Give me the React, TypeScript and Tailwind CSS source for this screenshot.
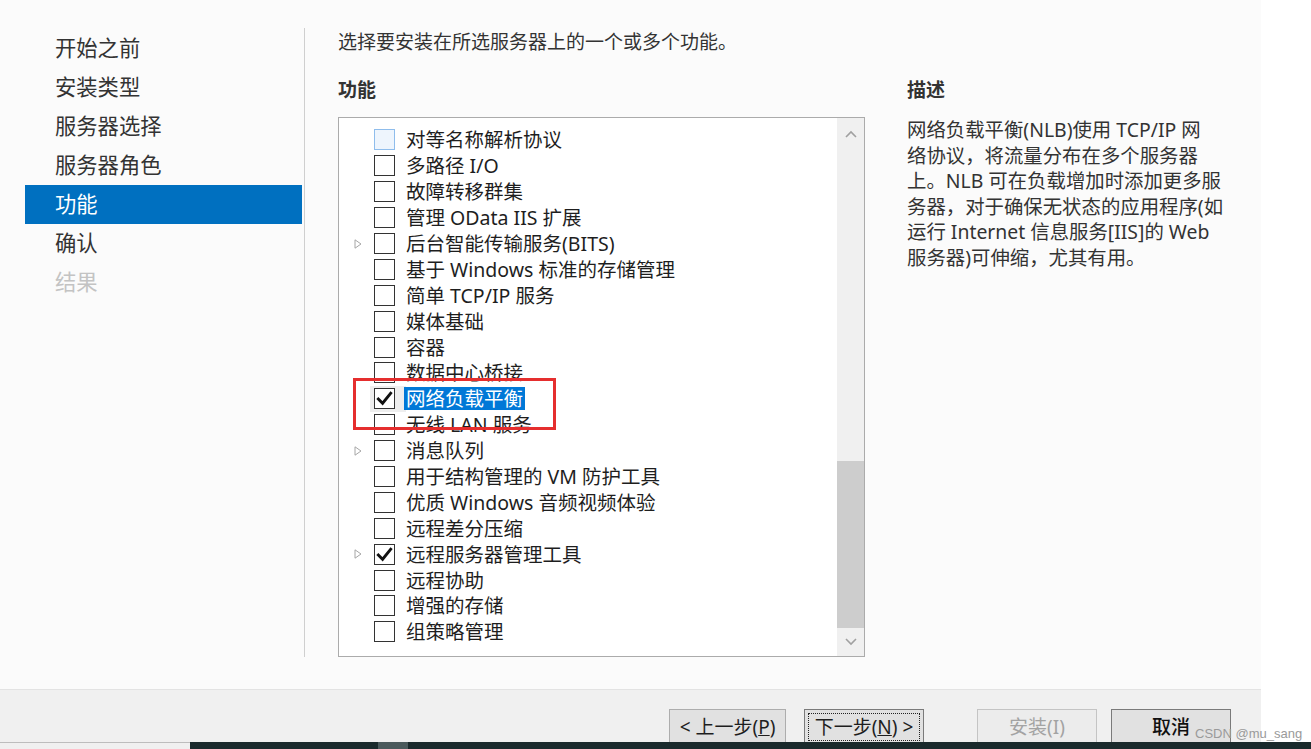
import React from "react";

type Feature = {
  label: string;
  checked?: boolean;
  expandable?: boolean;
  hover?: boolean;
  selected?: boolean;
};

const features: Feature[] = [
  { label: "对等名称解析协议", hover: true },
  { label: "多路径 I/O" },
  { label: "故障转移群集" },
  { label: "管理 OData IIS 扩展" },
  { label: "后台智能传输服务(BITS)", expandable: true },
  { label: "基于 Windows 标准的存储管理" },
  { label: "简单 TCP/IP 服务" },
  { label: "媒体基础" },
  { label: "容器" },
  { label: "数据中心桥接" },
  { label: "网络负载平衡", checked: true, selected: true },
  { label: "无线 LAN 服务" },
  { label: "消息队列", expandable: true },
  { label: "用于结构管理的 VM 防护工具" },
  { label: "优质 Windows 音频视频体验" },
  { label: "远程差分压缩" },
  { label: "远程服务器管理工具", checked: true, expandable: true },
  { label: "远程协助" },
  { label: "增强的存储" },
  { label: "组策略管理" },
];

const steps = [
  { label: "开始之前" },
  { label: "安装类型" },
  { label: "服务器选择" },
  { label: "服务器角色" },
  { label: "功能", active: true },
  { label: "确认" },
  { label: "结果", disabled: true },
];

const description = [
  "网络负载平衡(NLB)使用 TCP/IP 网",
  "络协议，将流量分布在多个服务器",
  "上。NLB 可在负载增加时添加更多服",
  "务器，对于确保无状态的应用程序(如",
  "运行 Internet 信息服务[IIS]的 Web",
  "服务器)可伸缩，尤其有用。",
];

const CheckMark = () => (
  <svg viewBox="0 0 20 20" className="h-[19px] w-[19px]">
    <path
      d="M3.5 10.5 L8 15 L16.5 4.5"
      fill="none"
      stroke="#111111"
      strokeWidth="3"
      strokeLinecap="square"
    />
  </svg>
);

const Expander = () => (
  <svg viewBox="0 0 8 10" className="h-[10px] w-[8px]">
    <path d="M1 0.8 L7 5 L1 9.2 Z" fill="none" stroke="#a6a6a6" strokeWidth="1" />
  </svg>
);

const FeatureRow = ({ f }: { f: Feature }) => (
  <div className="relative flex h-[25.9px] items-center">
    {f.selected && (
      <div className="absolute left-[31px] top-0 h-[26px] w-[36px] bg-[#eeeeee]" />
    )}
    <div className="relative flex w-[35px] justify-end pr-[12px]">
      {f.expandable && <Expander />}
    </div>
    <div
      className={
        "relative flex h-[21px] w-[21px] items-center justify-center border " +
        (f.hover ? "border-[#8fbdec] bg-[#eef5fd]" : "border-[#333333] bg-white")
      }
    >
      {f.checked && <CheckMark />}
    </div>
    <span
      className={
        "relative ml-[9px] whitespace-nowrap px-[2px] leading-[23px] " +
        (f.selected ? "bg-[#0078d7] text-white" : "text-[#1e1e1e]")
      }
    >
      {f.label}
    </span>
  </div>
);

export default function App() {
  return (
    <div className="relative flex h-[749px] w-[1311px] flex-col overflow-hidden bg-white font-['Noto_Sans','Noto_Sans_CJK_SC',sans-serif] text-[#1e1e1e]">
      <div className="flex h-[742px] w-[1261px] flex-col bg-[#fbfbfb]">
        {/* main area */}
        <div className="flex h-[689px]">
          {/* steps */}
          <div className="w-[304px] pl-[25px] pt-[28.5px]">
            {steps.map((s) => (
              <div
                key={s.label}
                className={
                  "flex h-[39px] w-[277px] items-center pl-[30px] text-[21.3px] " +
                  (s.active
                    ? "bg-[#0070c0] text-white"
                    : s.disabled
                    ? "text-[#c3c3c3]"
                    : "text-[#333333]")
                }
              >
                {s.label}
              </div>
            ))}
          </div>
          <div className="mt-[28px] h-[629px] w-px bg-[#cfcfcf]" />

          {/* content */}
          <div className="flex flex-col pl-[33px] pt-[29px]">
            <div className="text-[19px] leading-[26px] text-[#333333]">
              选择要安装在所选服务器上的一个或多个功能。
            </div>
            <div className="mt-[22px] flex">
              <div className="w-[527px]">
                <div className="text-[19px] font-bold leading-[26px] text-[#333333]">功能</div>
                <div className="mt-[14px] flex h-[540px] border border-[#ababab] bg-white">
                  <div className="flex-1 pt-[9px] text-[19.5px]">
                    {features.map((f) => (
                      <FeatureRow key={f.label} f={f} />
                    ))}
                  </div>
                  <div className="flex w-[27px] flex-col bg-[#f0f0f0]">
                    <div className="flex h-[32px] items-center justify-center">
                      <svg viewBox="0 0 12 8" className="h-[8px] w-[12px]">
                        <path d="M1 7 L6 2 L11 7" fill="none" stroke="#a0a0a0" strokeWidth="1.6" />
                      </svg>
                    </div>
                    <div className="flex-1" />
                    <div className="h-[167px] bg-[#cdcdcd]" />
                    <div className="flex h-[28px] items-center justify-center">
                      <svg viewBox="0 0 12 8" className="h-[8px] w-[12px]">
                        <path d="M1 1 L6 6 L11 1" fill="none" stroke="#a0a0a0" strokeWidth="1.6" />
                      </svg>
                    </div>
                  </div>
                </div>
              </div>
              <div className="ml-[42px] w-[330px]">
                <div className="text-[19px] font-bold leading-[26px] text-[#333333]">描述</div>
                <div className="mt-[14px] text-[19.4px] leading-[25.5px] text-[#333333]">
                  {description.map((line) => (
                    <div key={line} className="whitespace-nowrap">
                      {line}
                    </div>
                  ))}
                </div>
              </div>
            </div>
          </div>
        </div>

        {/* button bar */}
        <div className="flex h-[53px] items-start justify-end border-t border-[#e3e3e3] bg-[#f0f0f0] pr-[30px] pt-[19px] text-[19px]">
          <button className="flex h-[36px] w-[117px] items-center justify-center border border-[#adadad] bg-[#e1e1e1] text-[#1e1e1e]">
            &lt; 上一步(<span className="underline">P</span>)
          </button>
          <button className="ml-[18px] flex h-[36px] w-[120px] items-center justify-center border border-[#7a7a7a] bg-[#e1e1e1] p-[3px] text-[#1e1e1e]">
            <span className="flex h-full w-full items-center justify-center border border-dotted border-[#222222]">
              下一步(<span className="underline">N</span>) &gt;
            </span>
          </button>
          <button className="ml-[53px] flex h-[36px] w-[120px] items-center justify-center border border-[#c4c4c4] bg-[#ececec] text-[#a3a3a3]">
            安装(I)
          </button>
          <button className="ml-[14px] flex h-[36px] w-[120px] items-center justify-center border border-[#7a7a7a] bg-[#e1e1e1] font-medium text-[#111111]">
            取消
          </button>
        </div>
      </div>

      {/* taskbar strip */}
      <div className="flex h-[7px] w-full">
        <div className="w-[190px] border-t border-[#bdbdbd] bg-[#f0f0f0]" />
        <div className="w-[188px] bg-[#1a2a2c]" />
        <div className="w-[30px] bg-[#4b5a5c]" />
        <div className="flex-1 bg-[#1a2a2c]" />
      </div>

      {/* highlight annotation */}
      <div className="absolute left-[353px] top-[378px] h-[52px] w-[203px] border-[3px] border-[#e52e2e]" />

      {/* watermark */}
      <div className="absolute left-[1195px] top-[724px] font-['Liberation_Sans',sans-serif] text-[13px] text-[#9a9a9a]">
        CSDN @mu_sang
      </div>
    </div>
  );
}
